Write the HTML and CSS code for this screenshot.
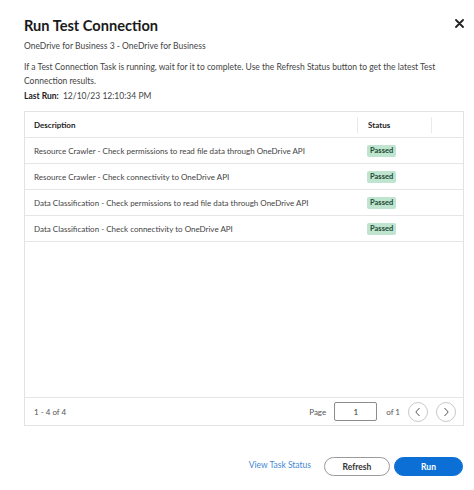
FILE: index.html
```html
<!DOCTYPE html>
<html lang="en">
<head>
    <meta charset="UTF-8">
    <title>Run Test Connection</title>
    <link rel="stylesheet" href="styles.css">
</head>
<body>
    <div class="modal">
        <div class="modal-header">
            <h1>Run Test Connection</h1>
            <button class="close" aria-label="Close">
                <svg width="9" height="9" viewBox="0 0 9 9"><path d="M1 1L8 8M8 1L1 8" stroke="#222" stroke-width="1.8" stroke-linecap="round"/></svg>
            </button>
        </div>
        <p class="subtitle">OneDrive for Business 3 - OneDrive for Business</p>
        <p class="info">If a Test Connection Task is running, wait for it to complete. Use the Refresh Status button to get the latest Test Connection results.</p>
        <p class="last-run"><b>Last Run:</b> 12/10/23 12:10:34 PM</p>

        <div class="grid">
            <div class="grid-head">
                <div class="col-desc">Description</div>
                <div class="col-status">Status</div>
                <div class="col-extra"></div>
            </div>
            <div class="grid-row">
                <div class="col-desc">Resource Crawler - Check permissions to read file data through OneDrive API</div>
                <div class="col-status"><span class="badge">Passed</span></div>
            </div>
            <div class="grid-row">
                <div class="col-desc">Resource Crawler - Check connectivity to OneDrive API</div>
                <div class="col-status"><span class="badge">Passed</span></div>
            </div>
            <div class="grid-row">
                <div class="col-desc">Data Classification - Check permissions to read file data through OneDrive API</div>
                <div class="col-status"><span class="badge">Passed</span></div>
            </div>
            <div class="grid-row">
                <div class="col-desc">Data Classification - Check connectivity to OneDrive API</div>
                <div class="col-status"><span class="badge">Passed</span></div>
            </div>
            <div class="grid-fill"></div>
            <div class="grid-foot">
                <span class="count">1 - 4 of 4</span>
                <div class="pager">
                    <span>Page</span>
                    <input class="page-input" type="text" value="1">
                    <span>of 1</span>
                    <button class="circle">
                        <svg width="8" height="10" viewBox="0 0 8 10"><path d="M5.5 1L1.8 5L5.5 9" fill="none" stroke="#555" stroke-width="1"/></svg>
                    </button>
                    <button class="circle">
                        <svg width="8" height="10" viewBox="0 0 8 10"><path d="M2.5 1L6.2 5L2.5 9" fill="none" stroke="#555" stroke-width="1"/></svg>
                    </button>
                </div>
            </div>
        </div>

        <div class="actions">
            <a class="link" href="#">View Task Status</a>
            <button class="btn btn-outline">Refresh</button>
            <button class="btn btn-primary">Run</button>
        </div>
    </div>
</body>
</html>
```

FILE: styles.css
```css
body {
    margin: 0;
    background: #fff;
    font-family: Lato, "Open Sans", sans-serif;
    color: #333;
}

.modal {
    padding: 14px 10px 0 24px;
}

.modal-header {
    display: flex;
    justify-content: space-between;
    align-items: flex-start;
}

.modal-header h1 {
    margin: 0;
    font-size: 14.6px;
    font-weight: 700;
    color: #1a1a1a;
    line-height: 24px;
}

.close {
    border: none;
    background: none;
    padding: 0;
    margin: 3px 0 0 0;
    width: 10px;
    height: 12px;
    display: flex;
    align-items: center;
    justify-content: center;
}

.subtitle {
    margin: 1px 0 0;
    font-size: 8.5px;
    line-height: 14px;
    color: #444;
}

.info {
    margin: 7px 0 0;
    font-size: 8.5px;
    line-height: 14px;
    color: #444;
    padding-right: 10px;
}

.last-run {
    margin: 1px 0 0;
    font-size: 8.5px;
    line-height: 14px;
    color: #444;
}

.last-run b {
    color: #222;
    margin-right: 2px;
}

.grid {
    margin-top: 8px;
    height: 313px;
    border: 1px solid #e3e3e3;
    display: flex;
    flex-direction: column;
    font-size: 8px;
    color: #444;
}

.grid-head,
.grid-row {
    display: flex;
    align-items: center;
    height: 25px;
    border-bottom: 1px solid #e6e6e6;
    flex-shrink: 0;
}

.grid-head {
    font-weight: 700;
    color: #222;
}

.col-desc {
    width: 332px;
    padding-left: 9px;
    box-sizing: border-box;
}

.col-status {
    width: 75px;
    padding-left: 10px;
    box-sizing: border-box;
}

.grid-head .col-status {
    height: 16px;
    display: flex;
    align-items: center;
    border-left: 1px solid #eaeaea;
    border-right: 1px solid #eaeaea;
}

.col-extra {
    flex: 1;
}

.badge {
    display: inline-block;
    background: #bfe4d0;
    color: #1c4a33;
    font-weight: 700;
    font-size: 7.5px;
    line-height: 12px;
    padding: 0 3px;
    border-radius: 2px;
}

.grid-fill {
    flex: 1;
}

.grid-foot {
    display: flex;
    justify-content: space-between;
    align-items: center;
    height: 27px;
    border-top: 1px solid #e6e6e6;
    padding: 0 7px 0 9px;
    color: #555;
}

.pager {
    display: flex;
    align-items: center;
}

.page-input {
    width: 43px;
    height: 19px;
    box-sizing: border-box;
    border: 1px solid #8c8c8c;
    border-radius: 2px;
    margin: 0 9px 0 8px;
    text-align: center;
    font-family: inherit;
    font-size: 8px;
    color: #333;
    padding: 0;
}

.circle {
    width: 20px;
    height: 20px;
    border-radius: 50%;
    border: 1px solid #c8c8c8;
    background: #fff;
    padding: 0;
    margin-left: 8px;
    display: flex;
    align-items: center;
    justify-content: center;
}

.actions {
    display: flex;
    justify-content: flex-end;
    align-items: center;
    margin-top: 31px;
    padding-right: 1px;
}

.link {
    color: #3f88d6;
    font-size: 8.5px;
    text-decoration: none;
    margin-right: 13px;
    margin-bottom: 3px;
}

.btn {
    height: 19px;
    border-radius: 10px;
    font-family: inherit;
    font-size: 8.5px;
    font-weight: 700;
    padding: 0;
}

.btn-outline {
    width: 66px;
    background: #fff;
    border: 1px solid #9a9a9a;
    color: #333;
    margin-right: 4px;
}

.btn-primary {
    width: 69px;
    background: #0b6fd6;
    border: 1px solid #0b6fd6;
    color: #fff;
}
```
